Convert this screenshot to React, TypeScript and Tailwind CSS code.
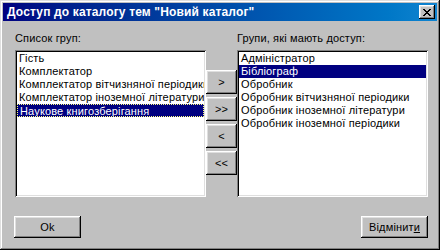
import React from "react";

const raised =
  "shadow-[inset_-1px_-1px_#000,inset_1px_1px_#fff,inset_-2px_-2px_#808080,inset_2px_2px_#dfdfdf]";
const sunken =
  "shadow-[inset_1px_1px_#808080,inset_-1px_-1px_#fff,inset_2px_2px_#000,inset_-2px_-2px_#dfdfdf]";

const allGroups = [
  "Гість",
  "Комплектатор",
  "Комплектатор вітчизняної періодики",
  "Комплектатор іноземної літератури",
  "Наукове книгозберігання",
];

const accessGroups = [
  "Адміністратор",
  "Бібліограф",
  "Обробник",
  "Обробник вітчизняної періодики",
  "Обробник іноземної літератури",
  "Обробник іноземної періодики",
];

function ListBox({
  items,
  selected,
  focused,
}: {
  items: string[];
  selected: number;
  focused?: boolean;
}) {
  return (
    <div className={`w-[191px] h-[147px] bg-white p-[2px] ${sunken}`}>
      <ul className="overflow-hidden h-full">
        {items.map((item, i) => {
          const sel = i === selected;
          return (
            <li
              key={item}
              className={`h-[13px] leading-[12px] pl-[2px] whitespace-nowrap overflow-hidden ${
                sel ? "bg-[#000080] text-white" : ""
              } ${sel && focused ? "border border-dotted border-[#ffff80] pl-[1px]" : ""}`}
            >
              {item}
            </li>
          );
        })}
      </ul>
    </div>
  );
}

function MoveButton({ label }: { label: string }) {
  return (
    <button
      className={`w-[31px] h-[24px] bg-[#c0c0c0] flex items-center justify-center text-[11px] ${raised}`}
    >
      {label}
    </button>
  );
}

export default function App() {
  return (
    <div
      className={`w-[440px] h-[250px] bg-[#c0c0c0] p-[3px] flex flex-col font-['Liberation_Sans',Arial,sans-serif] text-[11px] tracking-[0.15px] text-black shadow-[inset_-1px_-1px_#000,inset_1px_1px_#dfdfdf,inset_-2px_-2px_#808080,inset_2px_2px_#fff]`}
    >
      {/* title bar */}
      <div className="h-[18px] flex items-center justify-between bg-gradient-to-r from-[#000080] to-[#1084d0] pl-[4px] pr-[2px]">
        <span className="text-white font-bold text-[12px] tracking-[0.15px] leading-[18px] whitespace-nowrap">
          Доступ до каталогу тем "Новий каталог"
        </span>
        <button className={`w-[16px] h-[14px] bg-[#c0c0c0] flex items-center justify-center ${raised}`}>
          <svg width="8" height="7" viewBox="0 0 8 7" shapeRendering="crispEdges">
            <path d="M0 0h2v1h-2zM6 0h2v1h-2zM1 1h2v1h-2zM5 1h2v1h-2zM2 2h4v1h-4zM3 3h2v1h-2zM2 4h4v1h-4zM1 5h2v1h-2zM5 5h2v1h-2zM0 6h2v1h-2zM6 6h2v1h-2z" fill="#000" />
          </svg>
        </button>
      </div>

      <div className="flex flex-col pl-[12px]">
        <div className="flex mt-[11px] h-[13px] leading-[13px]">
          <span className="w-[222px]">Список груп:</span>
          <span>Групи, які мають доступ:</span>
        </div>

        <div className="flex mt-[5px]">
          <ListBox items={allGroups} selected={4} focused />
          <div className="w-[31px] flex flex-col gap-[3px] pt-[20px]">
            <MoveButton label=">" />
            <MoveButton label=">>" />
            <MoveButton label="<" />
            <MoveButton label="<<" />
          </div>
          <ListBox items={accessGroups} selected={1} />
        </div>
      </div>

      <div className="flex justify-between pl-[11px] pr-[9px] mt-[19px]">
        <button className={`w-[67px] h-[22px] bg-[#c0c0c0] ${raised}`}>Ok</button>
        <button className={`w-[67px] h-[22px] bg-[#c0c0c0] ${raised}`}>
          Відмінит<span className="underline">и</span>
        </button>
      </div>
    </div>
  );
}
